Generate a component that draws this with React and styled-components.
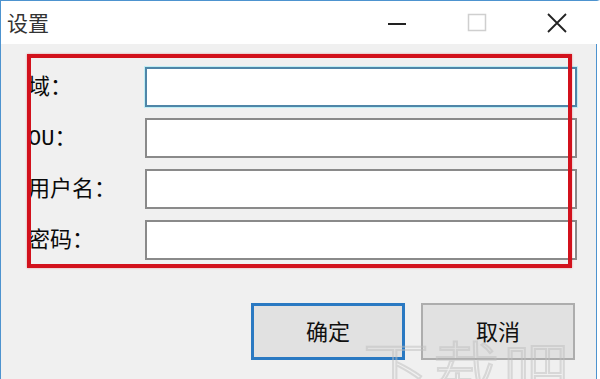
import React from 'react';
import styled, { createGlobalStyle } from 'styled-components';

const GlobalStyle = createGlobalStyle`
  html, body {
    margin: 0;
    padding: 0;
    overflow: hidden;
    background: #ffffff;
  }
`;

const Window = styled.div`
  position: relative;
  width: 600px;
  height: 379px;
  box-sizing: border-box;
  border: 1px solid #4d93cf;
  border-bottom: none;
  border-right-width: 3px;
  border-right-color: #ffffff;
  display: flex;
  flex-direction: column;
  overflow: hidden;
  font-family: 'Noto Sans CJK SC', 'Microsoft YaHei', sans-serif;
`;

const TitleBar = styled.div`
  height: 43px;
  background: #ffffff;
  display: flex;
  align-items: center;
  padding-left: 6px;
`;

const Title = styled.span`
  font-size: 21px;
  color: #333;
  flex: 1;
  margin-top: -2px;
`;

const Caption = styled.div`
  width: 80px;
  height: 43px;
  display: flex;
  align-items: center;
  justify-content: center;
  color: ${p => (p.$disabled ? '#cfcfcf' : '#222')};
`;

const Body = styled.div`
  position: relative;
  flex: 1;
  background: #f0f0f0;
  border-right: 1px solid #4d93cf;
  padding: 23px 19px 0 28px;
  display: flex;
  flex-direction: column;
`;

const Form = styled.div`
  display: grid;
  grid-template-columns: 116px 1fr;
  grid-auto-rows: 40px;
  row-gap: 11px;
  align-items: center;
`;

const Label = styled.label`
  font-family: 'Liberation Mono', 'Noto Sans CJK SC', monospace;
  font-size: 22px;
  color: #0a0a0a;
  height: 40px;
  line-height: 43px;
  margin-left: -1px;
  white-space: nowrap;
`;

const Input = styled.input`
  height: 40px;
  box-sizing: border-box;
  border: 2px solid ${p => (p.$focused ? '#4f86a8' : '#8a8a8a')};
  box-shadow: ${p => (p.$focused ? '0 0 0 1px #bfeef5' : 'none')};
  background: #fff;
  outline: none;
  font-size: 18px;
`;

const Actions = styled.div`
  display: flex;
  justify-content: flex-end;
  gap: 16px;
  margin-top: 43px;
  padding-right: 2px;
`;

const Button = styled.button`
  width: 154px;
  height: 57px;
  box-sizing: border-box;
  background: #e1e1e1;
  border: ${p => (p.$primary ? '3px solid #2a79c2' : '2px solid #adadad')};
  font-family: 'Noto Sans CJK SC', sans-serif;
  font-size: 22px;
  color: #111;
  padding: 0 0 4px;
`;

const Highlight = styled.div`
  position: absolute;
  left: 26px;
  top: 10px;
  width: 545px;
  height: 214px;
  box-sizing: border-box;
  border: 4px solid #d2111c;
  box-shadow: 0 0 2px rgba(210, 17, 28, 0.4);
  pointer-events: none;
`;

const Watermark = styled.div`
  position: absolute;
  left: 362px;
  top: 276px;
  font-family: 'Noto Sans CJK SC', sans-serif;
  font-size: 66px;
  font-weight: 300;
  letter-spacing: 4px;
  color: transparent;
  -webkit-text-stroke: 2px rgba(190, 190, 190, 0.5);
  pointer-events: none;
`;

const fields = [
  { label: '域：', focused: true },
  { label: 'OU：' },
  { label: '用户名：' },
  { label: '密码：' },
];

const App = () => {
  return (
    <>
      <GlobalStyle />
      <Window>
        <TitleBar>
          <Title>设置</Title>
          <Caption>
            <svg width="20" height="20" viewBox="0 0 20 20">
              <path d="M1 11h18" stroke="currentColor" strokeWidth="2" />
            </svg>
          </Caption>
          <Caption $disabled>
            <svg width="20" height="20" viewBox="0 0 20 20">
              <rect x="1.5" y="1.5" width="17" height="16" fill="none" stroke="currentColor" strokeWidth="1.5" />
            </svg>
          </Caption>
          <Caption>
            <svg width="20" height="20" viewBox="0 0 20 20">
              <path d="M1 1l18 18M19 1L1 19" stroke="currentColor" strokeWidth="1.8" />
            </svg>
          </Caption>
        </TitleBar>
        <Body>
          <Form>
            {fields.map(f => (
              <React.Fragment key={f.label}>
                <Label>{f.label}</Label>
                <Input $focused={f.focused} type={f.label === '密码：' ? 'password' : 'text'} />
              </React.Fragment>
            ))}
          </Form>
          <Actions>
            <Button $primary>确定</Button>
            <Button>取消</Button>
          </Actions>
          <Highlight />
          <Watermark>下载吧</Watermark>
        </Body>
      </Window>
    </>
  );
};

export default App;
